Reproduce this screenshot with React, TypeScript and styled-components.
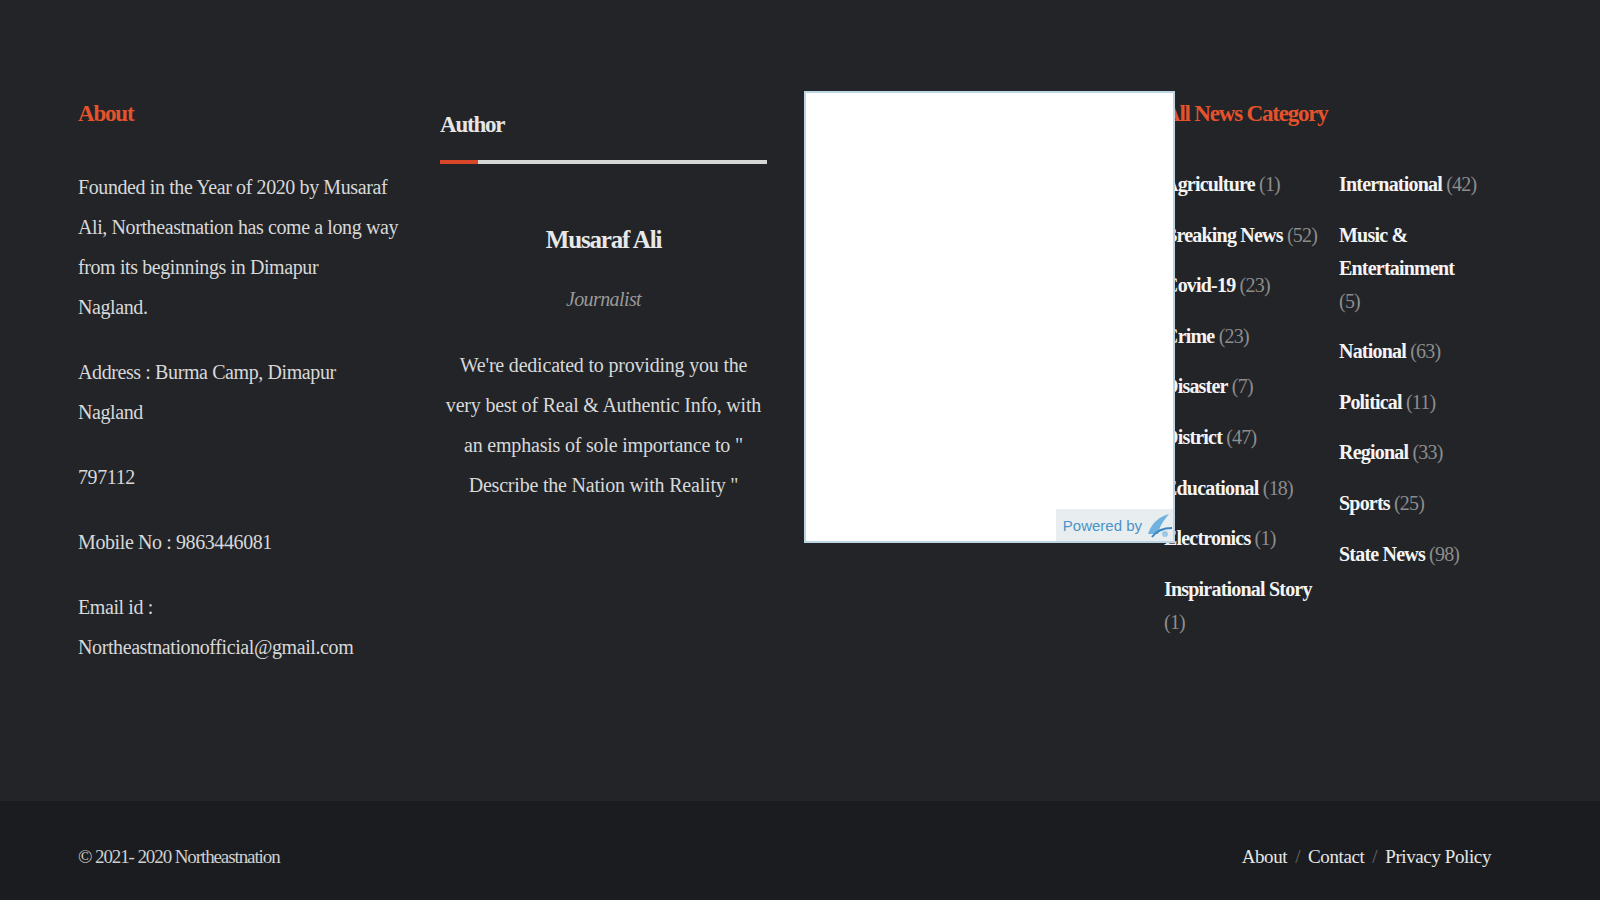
import { FC } from 'react';
import styled, { createGlobalStyle } from 'styled-components';

const GlobalStyle = createGlobalStyle`
  html, body {
    margin: 0;
    padding: 0;
    background: #222428;
  }
  body {
    font-family: "Liberation Serif", "DejaVu Serif", serif;
  }
`;

const Page = styled.div`
  width: 1600px;
  height: 900px;
  overflow: hidden;
  background: #222428;
`;

const Main = styled.section`
  height: 801px;
  box-sizing: border-box;
  padding: 91px 0 0 78px;
`;

const Columns = styled.div`
  display: grid;
  grid-template-columns: repeat(4, 327px);
  column-gap: 35px;
  align-items: start;
`;

const Column = styled.div`
  min-width: 0;
`;

const Heading = styled.h3<{ color?: string; top: number }>`
  margin: ${({ top }) => top}px 0 0;
  font-size: 23px;
  line-height: 32px;
  font-weight: 700;
  letter-spacing: -1.2px;
  color: ${({ color }) => color || '#e6e6e6'};
`;

const AboutBody = styled.div`
  margin-top: 37px;
  width: 322px;
`;

const Para = styled.p`
  margin: 0 0 25px;
  font-size: 20px;
  line-height: 40px;
  letter-spacing: -0.4px;
  color: #d8d8d8;
`;

const Line = styled.span`
  display: block;
`;

const Underline = styled.div`
  margin-top: 19px;
  height: 4px;
  background: #d6d6d6;
  display: flex;

  &::before {
    content: '';
    width: 38px;
    background: #d9472b;
  }
`;

const AuthorCard = styled.div`
  margin-top: 60px;
  text-align: center;
`;

const AuthorName = styled.div`
  font-size: 25px;
  line-height: 32px;
  font-weight: 700;
  letter-spacing: -1.2px;
  color: #e8e8e8;
`;

const Role = styled.div`
  margin-top: 32px;
  font-size: 20px;
  font-style: italic;
  letter-spacing: -0.6px;
  color: #9a9a9a;
`;

const Quote = styled.p`
  margin: 34px 0 0;
  padding: 0 5px;
  font-size: 20px;
  line-height: 40px;
  letter-spacing: -0.2px;
  color: #d8d8d8;
`;

const MapBox = styled.div`
  position: relative;
  z-index: 1;
  margin-left: 2px;
  width: 371px;
  height: 452px;
  box-sizing: border-box;
  background: #ffffff;
  border: 2px solid #bdd5e2;
  display: flex;
  align-items: flex-end;
  justify-content: flex-end;
`;

const Powered = styled.div`
  display: flex;
  align-items: center;
  gap: 3px;
  height: 32px;
  padding: 0 0 0 7px;
  background: #e8eef0;
  font-family: "Liberation Sans", Arial, sans-serif;
  font-size: 15px;
  color: #4a93c8;
`;

const CategoryGrid = styled.div`
  margin-top: 38px;
  display: grid;
  grid-template-columns: 166px 139px;
  column-gap: 9px;
`;

const CategoryList = styled.ul`
  list-style: none;
  margin: 0;
  padding: 0;
  display: flex;
  flex-direction: column;
  gap: 17.6px;
`;

const CategoryItem = styled.li`
  font-size: 20px;
  line-height: 33px;
  letter-spacing: -0.8px;
`;

const CatName = styled.span`
  font-weight: 700;
  color: #f4f4f4;
`;

const CatCount = styled.span`
  color: #8d8d8d;
`;

const Bottom = styled.footer`
  height: 99px;
  box-sizing: border-box;
  background: #1b1c1f;
  padding: 44px 109px 0 78px;
  display: flex;
  justify-content: space-between;
  font-size: 19px;
  line-height: 24px;
  color: #cfcfcf;
`;

const Copy = styled.span`
  letter-spacing: -1.1px;
`;

const Links = styled.nav`
  display: flex;
  gap: 8px;
  letter-spacing: -0.4px;
  color: #e6e6e6;
`;

const Slash = styled.span`
  color: #6a6a6a;
`;

const leftCats: [string, number][] = [
  ['Agriculture', 1],
  ['Breaking News', 52],
  ['Covid-19', 23],
  ['Crime', 23],
  ['Disaster', 7],
  ['District', 47],
  ['Educational', 18],
  ['Electronics', 1],
  ['Inspirational Story', 1],
];

const rightCats: [string, number][] = [
  ['International', 42],
  ['Music & Entertainment', 5],
  ['National', 63],
  ['Political', 11],
  ['Regional', 33],
  ['Sports', 25],
  ['State News', 98],
];

const renderCats = (list: [string, number][]) =>
  list.map(([name, count]) => (
    <CategoryItem key={name}>
      <CatName>{name}</CatName> <CatCount>({count})</CatCount>
    </CategoryItem>
  ));

const App: FC = () => {
  return <>
    <GlobalStyle />
    <Page>
      <Main>
        <Columns>
          <Column>
            <Heading color='#e5532c' top={7}>About</Heading>
            <AboutBody>
              <Para>
                Founded in the Year of 2020 by Musaraf Ali, Northeastnation has come a long way from its beginnings in Dimapur
                <Line>Nagland.</Line>
              </Para>
              <Para>Address : Burma Camp, Dimapur <Line>Nagland</Line></Para>
              <Para>797112</Para>
              <Para>Mobile No : 9863446081</Para>
              <Para>Email id : Northeastnationofficial@gmail.com</Para>
            </AboutBody>
          </Column>

          <Column>
            <Heading top={18}>Author</Heading>
            <Underline />
            <AuthorCard>
              <AuthorName>Musaraf Ali</AuthorName>
              <Role>Journalist</Role>
              <Quote>We're dedicated to providing you the very best of Real &amp; Authentic Info, with an emphasis of sole importance to " Describe the Nation with Reality "</Quote>
            </AuthorCard>
          </Column>

          <Column>
            <MapBox>
              <Powered>
                Powered by
                <svg width='28' height='30' viewBox='0 0 28 30'>
                  <path d='M3 24 C7 12, 14 7, 24 4 C19 10, 15 15, 13 24 Z' fill='#6fb2de' />
                  <path d='M7 27 C12 20, 19 18, 27 18' stroke='#3b86c0' strokeWidth='2' fill='none' />
                  <circle cx='20' cy='24' r='3' fill='#9cc9e6' />
                </svg>
              </Powered>
            </MapBox>
          </Column>

          <Column>
            <Heading color='#e5532c' top={7}>All News Category</Heading>
            <CategoryGrid>
              <CategoryList>{renderCats(leftCats)}</CategoryList>
              <CategoryList>{renderCats(rightCats)}</CategoryList>
            </CategoryGrid>
          </Column>
        </Columns>
      </Main>
      <Bottom>
        <Copy>© 2021- 2020 Northeastnation</Copy>
        <Links>
          <span>About</span><Slash>/</Slash>
          <span>Contact</span><Slash>/</Slash>
          <span>Privacy Policy</span>
        </Links>
      </Bottom>
    </Page>
  </>
}

export default App;
